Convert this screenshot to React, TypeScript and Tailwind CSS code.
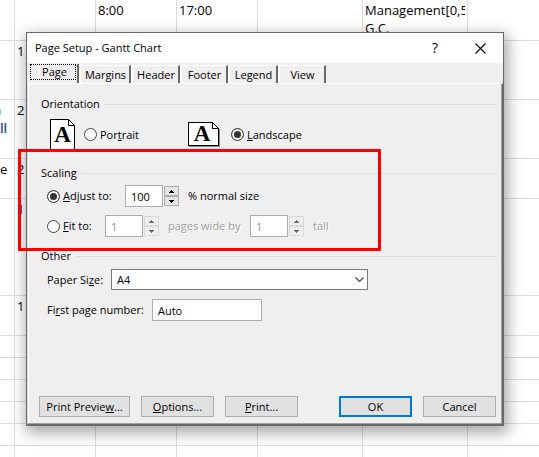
import { useState } from 'react';
import type { ReactNode } from 'react';

type SheetRow = { height: string; lead?: ReactNode; cells?: ReactNode[]; last?: boolean };

const rows: SheetRow[] = [
  {
    height: 'h-[41px]',
    cells: ['', '8:00', '17:00', '', <>Management[0,5<br />G.C.</>],
  },
  { height: 'h-[59px]', cells: ['1'] },
  {
    height: 'h-[59px]',
    lead: (
      <div className="font-semibold text-[#1f4e9c]">
        <div className="-ml-[7px]">n</div>
        <div>ll</div>
      </div>
    ),
    cells: ['2'],
  },
  { height: 'h-[40px]', lead: 'e', cells: ['2'] },
  { height: 'h-[97px]', cells: ['1'] },
  { height: 'h-[40px]', cells: ['1'] },
  { height: 'h-[22px]' },
  { height: 'h-[22px]' },
  { height: 'h-[22px]' },
  { height: 'h-[22px]' },
  { height: 'h-[22px]' },
  { height: 'h-[11px]', last: true },
];

function Sheet() {
  return (
    <table className="w-full table-fixed border-separate border-spacing-0 text-[13px] leading-[18px]">
      <colgroup>
        <col className="w-[15px]" />
        <col className="w-[81px]" />
        <col className="w-[81px]" />
        <col className="w-[81px]" />
        <col className="w-[105px]" />
        <col className="w-[105px]" />
        <col />
      </colgroup>
      <tbody>
        {rows.map((row, r) => (
          <tr key={r} className={row.height}>
            <td
              className={
                'overflow-hidden whitespace-nowrap border-r border-[#dcdcdc] p-0 pt-px align-top' +
                (row.last ? '' : ' border-b')
              }
            >
              {row.lead}
            </td>
            {[0, 1, 2, 3, 4].map((c) => (
              <td
                key={c}
                className={
                  'border-r border-[#dcdcdc] p-0 px-[2px] pt-px align-top' + (row.last ? '' : ' border-b')
                }
              >
                <div className="max-h-[39px] overflow-hidden whitespace-nowrap">{row.cells?.[c]}</div>
              </td>
            ))}
            <td className={'border-[#dcdcdc] p-0' + (row.last ? '' : ' border-b')} />
          </tr>
        ))}
      </tbody>
    </table>
  );
}

function Heading({ children }: { children: ReactNode }) {
  return (
    <div className="flex h-4 items-center gap-1">
      <h2>{children}</h2>
      <div className="h-px flex-1 bg-[#dcdcdc]" />
    </div>
  );
}

function Radio({
  name,
  checked,
  onChange,
  children,
}: {
  name: string;
  checked: boolean;
  onChange: () => void;
  children: ReactNode;
}) {
  return (
    <label className="flex items-center gap-[3px] whitespace-nowrap">
      <input
        type="radio"
        name={name}
        checked={checked}
        onChange={onChange}
        className="size-[13px] shrink-0 appearance-none rounded-full border border-[#444] bg-white checked:bg-[#333] checked:shadow-[inset_0_0_0_2px_#fff]"
      />
      <span>{children}</span>
    </label>
  );
}

function Arrow({ down }: { down?: boolean }) {
  return (
    <svg width="5" height="3" viewBox="0 0 5 3" shapeRendering="crispEdges" aria-hidden="true">
      <path
        d={down ? 'M0 0h5v1h-1v1h-1v1h-1v-1h-1v-1h-1z' : 'M2 0h1v1h1v1h1v1h-5v-1h1v-1h1z'}
        fill="currentColor"
      />
    </svg>
  );
}

function Spinner({ label, start, disabled }: { label: string; start: number; disabled?: boolean }) {
  const [value, setValue] = useState(start);
  const tone = disabled
    ? 'border-[#dadada] bg-[#efefef] text-[#6d6d6d]'
    : 'border-[#adadad] bg-[#e6e6e6] text-black';
  return (
    <div className="flex items-center gap-px">
      <input
        type="text"
        aria-label={label}
        value={value}
        disabled={disabled}
        onChange={(e) => setValue(Number(e.target.value) || 0)}
        className="h-[22px] w-[38px] border border-[#abadb3] bg-white px-[5px] text-black disabled:text-[#8b8b8b]"
      />
      <div className="flex w-[15px] flex-col">
        <button
          type="button"
          aria-label="Increase"
          disabled={disabled}
          onClick={() => setValue(value + 1)}
          className={'flex h-[10px] items-center justify-center border ' + tone}
        >
          <Arrow />
        </button>
        <button
          type="button"
          aria-label="Decrease"
          disabled={disabled}
          onClick={() => setValue(value - 1)}
          className={'flex h-[10px] items-center justify-center border ' + tone}
        >
          <Arrow down />
        </button>
      </div>
    </div>
  );
}

function PortraitIcon() {
  return (
    <svg width="25" height="31" viewBox="0 0 25 31" shapeRendering="crispEdges" aria-hidden="true">
      <path d="M.5 .5H18.500L24.500 6.500V30.500H.5Z" fill="#fff" stroke="#000" />
      <path d="M18.500 .5V6.500H24.500" fill="none" stroke="#000" />
      <text x="12.500" y="23" textAnchor="middle" fontSize="23" fontWeight="700" fontFamily="Liberation Serif, serif">
        A
      </text>
    </svg>
  );
}

function LandscapeIcon() {
  return (
    <svg width="32" height="25" viewBox="0 0 32 25" shapeRendering="crispEdges" aria-hidden="true">
      <path d="M1 24.500H31.500V7" fill="none" stroke="#888" />
      <path d="M.5 .5H24.500L30.500 6.500V23.500H.5Z" fill="#fff" stroke="#000" />
      <path d="M24.500 .5V6.500H30.500" fill="none" stroke="#000" />
      <text x="14" y="19" textAnchor="middle" fontSize="23" fontWeight="700" fontFamily="Liberation Serif, serif">
        A
      </text>
    </svg>
  );
}

const tabs = [
  { name: 'Margins', width: 'w-[52px]' },
  { name: 'Header', width: 'w-[49px]' },
  { name: 'Footer', width: 'w-[48px]' },
  { name: 'Legend', width: 'w-[50px]' },
  { name: 'View', width: 'w-[48px]' },
];

function PushButton({ width, primary, children }: { width: string; primary?: boolean; children: ReactNode }) {
  return (
    <button
      type="button"
      className={
        'h-[21px] whitespace-nowrap bg-[#e1e1e1] leading-none ' +
        width +
        (primary ? ' border-2 border-[#0078d7]' : ' border border-[#adadad]')
      }
    >
      {children}
    </button>
  );
}

function PageSetup() {
  const [orientation, setOrientation] = useState('landscape');
  const [scaling, setScaling] = useState('adjust');
  return (
    <div
      role="dialog"
      aria-label="Page Setup - Gantt Chart"
      className="absolute top-8 left-[26px] w-[478px] border border-[#696969] bg-[#efefef] text-[11px] leading-4 text-black shadow-[2px_5px_14px_2px_rgba(0,0,0,0.35)]"
    >
      <header className="flex h-[30px] items-center bg-white pr-[17px] pl-2">
        <h1 className="flex-1">Page Setup - Gantt Chart</h1>
        <button type="button" aria-label="Help" className="w-4 text-[14px]">
          ?
        </button>
        <button type="button" aria-label="Close" className="ml-8">
          <svg width="11" height="11" viewBox="0 0 11 11" aria-hidden="true">
            <path d="M.5 .5L10.500 10.500M10.500 .5L.5 10.500" stroke="#000" strokeWidth="1.100" />
          </svg>
        </button>
      </header>

      <div role="tablist" className="flex h-5 items-end">
        <button
          role="tab"
          aria-selected="true"
          type="button"
          className="flex h-[19px] w-[52px] border-r-2 border-[#696969] pl-[3px]"
        >
          <span className="h-4 w-[46px] border border-dotted border-black pl-[3px] leading-[14px]">Page</span>
        </button>
        {tabs.map((tab) => (
          <button
            key={tab.name}
            role="tab"
            aria-selected="false"
            type="button"
            className={
              'h-[18px] border-t border-r-2 border-t-white border-r-[#696969] pl-[3px] shadow-[inset_2px_0_0_#fff] ' +
              tab.width
            }
          >
            {tab.name}
          </button>
        ))}
      </div>

      <div className="border border-t-white border-r-[#696969] border-b-[#696969] border-l-[#dcdcdc] pt-3 pb-[7px] shadow-[inset_-1px_-1px_0_#a0a0a0,inset_1px_0_0_#fff]">
        <div className="pr-[5px] pl-[13px]">
          <Heading>Orientation</Heading>
          <div className="mt-[7px] flex items-center pl-[9px]">
            <div className="flex w-[138px] items-center gap-[9px]">
              <PortraitIcon />
              <Radio
                name="orientation"
                checked={orientation === 'portrait'}
                onChange={() => setOrientation('portrait')}
              >
                Por<u>t</u>rait
              </Radio>
            </div>
            <div className="flex items-center gap-[11px]">
              <LandscapeIcon />
              <Radio
                name="orientation"
                checked={orientation === 'landscape'}
                onChange={() => setOrientation('landscape')}
              >
                <u>L</u>andscape
              </Radio>
            </div>
          </div>

          <div className="mt-[15px]">
            <Heading>Scaling</Heading>
          </div>
          <div className="mt-1 flex flex-col gap-2 pl-[6px]">
            <div className="flex items-center">
              <div className="w-[78px]">
                <Radio name="scaling" checked={scaling === 'adjust'} onChange={() => setScaling('adjust')}>
                  <u>A</u>djust to:
                </Radio>
              </div>
              <Spinner label="Percent of normal size" start={100} />
              <span className="ml-[9px]">% normal size</span>
            </div>
            <div className="flex items-center text-[#9d9d9d]">
              <div className="w-[58px] text-black">
                <Radio name="scaling" checked={scaling === 'fit'} onChange={() => setScaling('fit')}>
                  <u>F</u>it to:
                </Radio>
              </div>
              <Spinner label="Pages wide" start={1} disabled={scaling !== 'fit'} />
              <span className="w-[91px] pl-[9px] [text-shadow:1px_1px_0_#fff]">pages wide by</span>
              <Spinner label="Pages tall" start={1} disabled={scaling !== 'fit'} />
              <span className="pl-[9px] [text-shadow:1px_1px_0_#fff]">tall</span>
            </div>
          </div>

          <div className="mt-[11px]">
            <Heading>Other</Heading>
          </div>
          <div className="mt-[5px] flex items-center pl-[6px]">
            <label htmlFor="paper" className="w-16">
              Paper Si<u>z</u>e:
            </label>
            <div className="relative w-[257px]">
              <select
                id="paper"
                className="block h-[21px] w-full appearance-none border border-[#7a7a7a] bg-white px-[5px] leading-none"
              >
                <option>A4</option>
              </select>
              <svg
                className="pointer-events-none absolute top-2 right-[4px]"
                width="9"
                height="6"
                viewBox="0 0 9 6"
                aria-hidden="true"
              >
                <path d="M.5 .5L4.500 4.500L8.500 .5" fill="none" stroke="#444" strokeWidth="1.200" />
              </svg>
            </div>
          </div>
          <div className="mt-[9px] flex items-center pl-[6px]">
            <label htmlFor="first" className="w-[105px]">
              Fi<u>r</u>st page number:
            </label>
            <input
              id="first"
              type="text"
              defaultValue="Auto"
              className="h-[22px] w-[110px] border border-[#abadb3] bg-white px-[5px]"
            />
          </div>
        </div>

        <footer className="mt-[75px] flex gap-[11px] pr-[6px] pl-[11px]">
          <PushButton width="w-[91px]">
            Print Previe<u>w</u>...
          </PushButton>
          <PushButton width="w-[73px]">
            <u>O</u>ptions...
          </PushButton>
          <PushButton width="w-[73px]">
            <u>P</u>rint...
          </PushButton>
          <div className="ml-auto flex gap-[11px]">
            <PushButton width="w-[73px]" primary>
              OK
            </PushButton>
            <PushButton width="w-[73px]">Cancel</PushButton>
          </div>
        </footer>
      </div>
    </div>
  );
}

export default function App() {
  return (
    <main className="relative min-h-screen overflow-hidden bg-white font-['Open_Sans','Noto_Sans',sans-serif] text-black">
      <Sheet />
      <PageSetup />
      <div className="pointer-events-none absolute top-[149px] left-[18px] h-[102px] w-[363px] rounded-[1px] border-3 border-[#fe0000]" />
    </main>
  );
}
